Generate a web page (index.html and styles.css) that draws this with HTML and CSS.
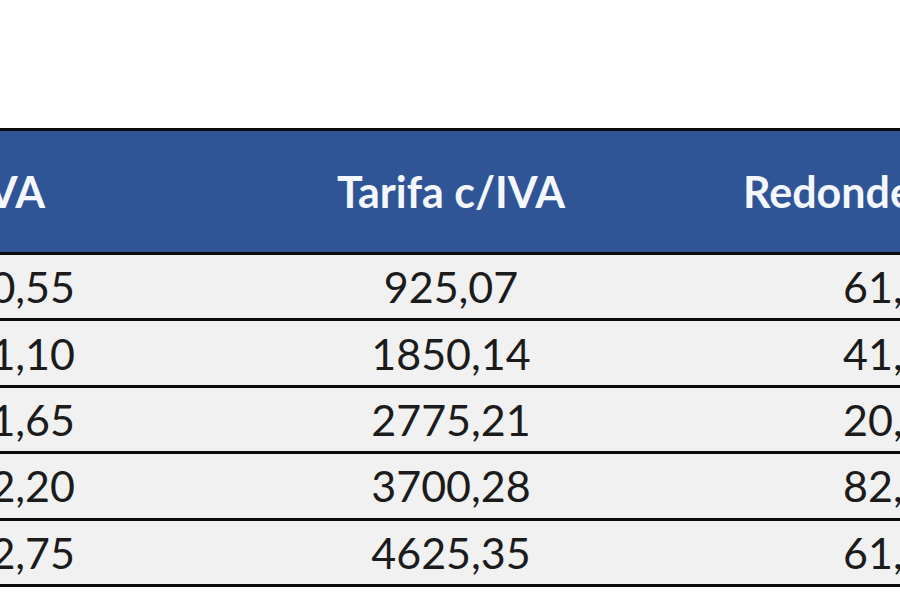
FILE: index.html
```html
<!DOCTYPE html>
<html lang="es">
<head>
<meta charset="utf-8">
<title>Tarifas</title>
<link rel="stylesheet" href="styles.css">
</head>
<body>
<div class="sheet">
  <div class="table">
    <div class="row head">
      <div class="cell c1">Tarifa s/IVA</div>
      <div class="cell c2">Tarifa c/IVA</div>
      <div class="cell c3">Redondeo</div>
    </div>
    <div class="row">
      <div class="cell c1">770,55</div>
      <div class="cell c2">925,07</div>
      <div class="cell c3">61,</div>
    </div>
    <div class="row">
      <div class="cell c1">1541,10</div>
      <div class="cell c2">1850,14</div>
      <div class="cell c3">41,</div>
    </div>
    <div class="row">
      <div class="cell c1">2311,65</div>
      <div class="cell c2">2775,21</div>
      <div class="cell c3">20,</div>
    </div>
    <div class="row">
      <div class="cell c1">3082,20</div>
      <div class="cell c2">3700,28</div>
      <div class="cell c3">82,</div>
    </div>
    <div class="row">
      <div class="cell c1">3852,75</div>
      <div class="cell c2">4625,35</div>
      <div class="cell c3">61,</div>
    </div>
  </div>
</div>
</body>
</html>
```
FILE: styles.css
```css
html, body {
  margin: 0;
  padding: 0;
  background: #ffffff;
}

.sheet {
  width: 900px;
  height: 600px;
  overflow: hidden;
  padding-top: 128px;
  box-sizing: border-box;
}

.table {
  border-top: 3px solid #0b0b0b;
  font-family: Lato, "Open Sans", sans-serif;
}

.row {
  display: grid;
  grid-template-columns: 300px 302px 298px;
  height: 63.4px;
  background: #f1f1f1;
  border-bottom: 3px solid #0b0b0b;
  color: #1b1b1b;
  font-size: 43px;
}

.row.head {
  height: 121px;
  background: #2f5597;
  color: #f4f7fc;
  font-weight: 700;
  font-size: 43px;
}

.cell {
  display: flex;
  align-items: center;
  white-space: nowrap;
  min-width: 0;
}

.c1 {
  justify-content: flex-end;
  padding-right: 225px;
}

.head .c1 {
  padding-right: 255px;
}

.c2 {
  justify-content: center;
}

.c3 {
  justify-content: flex-start;
  padding-left: 241px;
}

.head .c3 {
  padding-left: 141px;
}
```
